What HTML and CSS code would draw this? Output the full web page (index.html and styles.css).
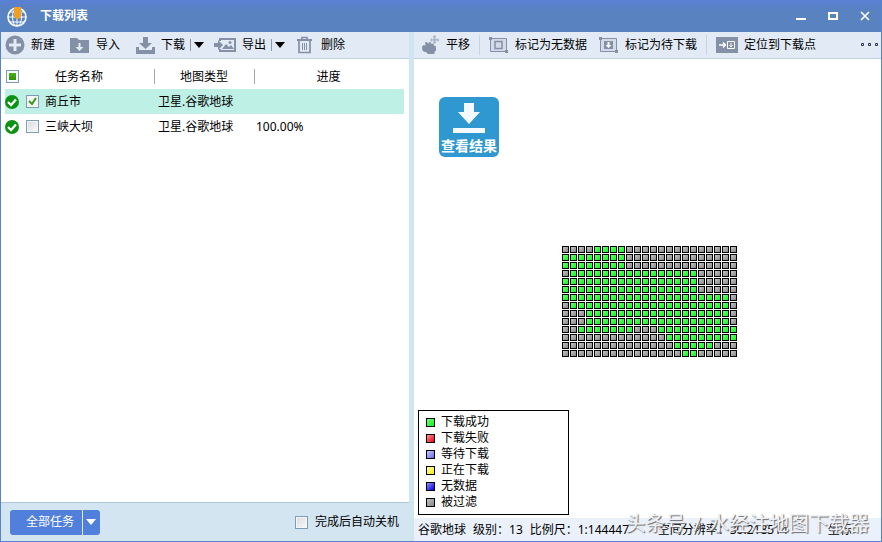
FILE: index.html
```html
<!DOCTYPE html>
<html lang="zh-CN">
<head>
<meta charset="utf-8">
<title>下载列表</title>
<link rel="stylesheet" href="styles.css">
</head>
<body>
<div class="window">
  <header class="titlebar">
    <svg class="logo" width="22" height="24" viewBox="0 0 22 24" fill="none" stroke="#fff">
      <circle cx="11" cy="14" r="9" stroke-width="1.6"/>
      <ellipse cx="11" cy="14" rx="4.5" ry="9"/>
      <path d="M2 14h18M4 9h14M4 19h14M11 14v9"/>
      <path d="M8 4h7v8h1l-4.500 5L7 12h1z" fill="#f0a020" stroke="none"/>
    </svg>
    <h1>下载列表</h1>
    <div class="controls">
      <button aria-label="最小化"><svg width="12" height="12"><path d="M1 9h10" stroke="#fff" stroke-width="2"/></svg></button>
      <button aria-label="最大化"><svg width="12" height="12"><path d="M2 3h8v6H2z" fill="none" stroke="#fff" stroke-width="2"/></svg></button>
      <button aria-label="关闭"><svg width="12" height="12"><path d="M2 2l8 8M10 2l-8 8" stroke="#fff" stroke-width="1.700"/></svg></button>
    </div>
  </header>

  <div class="panes">
    <section class="tasks">
      <nav class="toolbar">
        <button class="tool"><svg width="20" height="20"><circle cx="10" cy="10" r="9.500" fill="#8390a5"/><path d="M10 4v12M4 10h12" stroke="#e4ebf5" stroke-width="3"/></svg>新建</button>
        <button class="tool"><svg width="20" height="20"><path d="M0 3h7l2 2h10v13H0z" fill="#8390a5"/><path d="M8.500 8h2v4h3l-4 4-4-4h3z" fill="#e4ebf5"/></svg>导入</button>
        <div class="split">
          <button class="tool"><svg width="20" height="20"><path d="M8 2h5v6h4l-6.500 6L4 8h4z" fill="#8390a5"/><path d="M1 12h3v3h13v-3h3v7H1z" fill="#8390a5"/></svg>下载</button>
          <button class="drop" aria-label="下载选项"><svg width="10" height="6"><path d="M0 0h10L5 6z" fill="#000"/></svg></button>
        </div>
        <div class="split">
          <button class="tool"><svg width="22" height="20"><path d="M5 3h17v14H5v-3h2v1h13V5H7v1H5z" fill="#8390a5"/><path d="M0 8h4V5l5 5-5 5v-3H0z" fill="#8390a5"/><path d="M8 14l4-5 3 3 2-2 3 4z" fill="#8390a5"/><circle cx="16" cy="7.500" r="1.500" fill="#8390a5"/></svg>导出</button>
          <button class="drop" aria-label="导出选项"><svg width="10" height="6"><path d="M0 0h10L5 6z" fill="#000"/></svg></button>
        </div>
        <button class="tool"><svg width="20" height="20" fill="none" stroke="#8390a5"><path d="M2 5h15" stroke-width="2"/><path d="M7 4V2.500h5V4M4 6v11.500h11V6" stroke-width="1.700"/><path d="M7.500 8v7M9.500 8v7M11.500 8v7"/></svg>删除</button>
      </nav>
      <div class="list">
        <table>
          <colgroup><col class="col-name"><col class="col-type"><col></colgroup>
          <thead>
            <tr>
              <th><input class="all" type="checkbox" aria-label="全选">任务名称</th>
              <th>地图类型</th>
              <th>进度</th>
            </tr>
          </thead>
          <tbody>
            <tr class="selected">
              <td><div class="name"><svg class="done" width="14" height="14"><circle cx="7" cy="7" r="7" fill="#0b9212"/><path d="M3 7l3 3 5-5.500" fill="none" stroke="#fff" stroke-width="2.300"/></svg><input id="t1" type="checkbox" checked><label for="t1">商丘市</label></div></td>
              <td>卫星.谷歌地球</td>
              <td></td>
            </tr>
            <tr>
              <td><div class="name"><svg class="done" width="14" height="14"><circle cx="7" cy="7" r="7" fill="#0b9212"/><path d="M3 7l3 3 5-5.500" fill="none" stroke="#fff" stroke-width="2.300"/></svg><input id="t2" type="checkbox"><label for="t2">三峡大坝</label></div></td>
              <td>卫星.谷歌地球</td>
              <td class="progress">100.00%</td>
            </tr>
          </tbody>
        </table>
      </div>
      <footer class="actions">
        <div class="all-tasks">
          <button>全部任务</button>
          <button class="more" aria-label="更多操作"><svg width="10" height="6"><path d="M0 0h10L5 6z" fill="#fff"/></svg></button>
        </div>
        <label class="shutdown"><input type="checkbox">完成后自动关机</label>
      </footer>
    </section>

    <section class="viewer">
      <nav class="toolbar">
        <button class="tool"><svg width="20" height="20" fill="#8390a5"><path d="M2 12l1.500-2 2 .5L5 7.500l2-.5 1.500 2L9 7l2 .5.5 1.500 2-.5.500 2 2 1v4l-1.500 1.500V19H8l-2-2c-3 0-4-2-4-5z"/><path d="M14.500 0l2 2h-1v2h2V3l2 2-2 2V5.500h-2V7h1l-2 2-2-2h1V5.500h-1.500V7l-2-2 2-2v1.200h1.500V2h-1z" opacity=".6"/></svg>平移</button>
        <span class="rule"></span>
        <button class="tool"><svg width="20" height="20" fill="none" stroke="#8390a5"><path d="M1.500 3.500h16v13h-16z" fill="#d3dbe8"/><path d="M6 6.500h7v7H6z" stroke-width="1.500"/><path d="M0 2h3v3H0zM16 15h3v3h-3z" fill="#8390a5" stroke="none"/></svg>标记为无数据</button>
        <button class="tool"><svg width="20" height="20" fill="none" stroke="#8390a5"><path d="M1.500 3.500h16v13h-16z" fill="#d3dbe8"/><path d="M5 6h9v8H5z" fill="#8390a5" stroke="none"/><path d="M8.500 7h2v3h2l-3 3-3-3h2z" fill="#fff" stroke="none"/><path d="M0 2h3v3H0zM16 15h3v3h-3z" fill="#8390a5" stroke="none"/></svg>标记为待下载</button>
        <span class="rule"></span>
        <button class="tool"><svg width="22" height="20" fill="none" stroke="#fff"><path d="M0 2h22v16H0z" fill="#8390a5" stroke="none"/><path d="M3 10h6M7 7.500L9.500 10 7 12.500" stroke-width="1.500"/><path d="M11.500 6.500h7v7h-7zM15 8v4M13.500 10.500l1.500 1.500 1.500-1.500"/></svg>定位到下载点</button>
        <button class="overflow" aria-label="更多"><svg width="18" height="4" fill="#e4ebf5" stroke="#26344f"><path d="M.5.500h2v2h-2zM7.500.500h2v2h-2zM14.500.500h2v2h-2z"/></svg></button>
      </nav>
      <div class="map">
        <button class="result"><svg width="34" height="32" fill="#f4faff"><path d="M12 1h10v9h6L17 22 6 10h6zM1 26h32v5H1z"/></svg>查看结果</button>
        <div class="tiles" id="tiles"></div>
        <ul class="legend">
          <li><i class="tile ok"></i>下载成功</li>
          <li><i class="tile failed"></i>下载失败</li>
          <li><i class="tile waiting"></i>等待下载</li>
          <li><i class="tile active"></i>正在下载</li>
          <li><i class="tile nodata"></i>无数据</li>
          <li><i class="tile filtered"></i>被过滤</li>
        </ul>
      </div>
      <footer class="status">
        <span>谷歌地球</span><span>级别：13</span><span class="scale">比例尺：1:144447</span><span class="resolution">空间分辨率：30.218514</span><span>坐标</span>
      </footer>
      <div class="watermark"><span>头条号</span><span>/</span><span>水经注地图下载器</span></div>
    </section>
  </div>
</div>
<script src="tiles.js"></script>
</body>
</html>
```
FILE: styles.css
```css
* {
  box-sizing: border-box;
}

body {
  margin: 0;
  font: 12px/16px "Noto Sans", "Noto Sans CJK SC", sans-serif;
  color: #000;
}

button {
  margin: 0;
  padding: 0;
  border: 0;
  background: none;
  color: inherit;
  font: inherit;
}

svg {
  display: block;
  flex: none;
}

input[type="checkbox"] {
  appearance: none;
  flex: none;
  width: 13px;
  height: 13px;
  margin: 0;
  border: 1px solid #7e9db5;
  background: linear-gradient(135deg, #d8dade, #fafafa);
  box-shadow: inset 0 0 0 1px #f4f6f8;
}

input[type="checkbox"]:checked {
  background: #f4f6f4 url("data:image/svg+xml,%3Csvg xmlns='http://www.w3.org/2000/svg' width='11' height='11'%3E%3Cpath d='M2 5l3 3 4-6' fill='none' stroke='%23349a1c' stroke-width='2'/%3E%3C/svg%3E") center no-repeat;
}

.window {
  display: flex;
  flex-direction: column;
  height: 100vh;
  border: 1px solid #5882cc;
  border-top: 0;
  background: #fff;
}

.titlebar {
  display: flex;
  flex: none;
  align-items: center;
  height: 32px;
  padding: 0 10px 0 5px;
  background: linear-gradient(#5a80d6, #5882c0 10px);
  color: #fff;
}

.titlebar h1 {
  margin: 0 0 0 12px;
  font-size: 12px;
  font-weight: 700;
}

.logo {
  margin-top: -2px;
}

.controls {
  display: flex;
  gap: 20px;
  margin-left: auto;
}

.panes {
  display: grid;
  flex: 1;
  grid-template-columns: 413fr 467fr;
  min-height: 0;
}

.tasks,
.viewer {
  display: flex;
  flex-direction: column;
  min-width: 0;
}

.tasks {
  border-right: 5px solid #d0e5ef;
}

.viewer {
  position: relative;
}

.toolbar {
  display: flex;
  flex: none;
  align-items: center;
  gap: 10px;
  height: 27px;
  padding: 0 4px;
  border-bottom: 1px solid #b8d2de;
  background: #e2eaf5;
  white-space: nowrap;
}

.tool {
  display: flex;
  align-items: center;
  gap: 6px;
}

.tasks .toolbar > .tool {
  padding-right: 5px;
}

.split {
  display: flex;
  align-items: center;
  gap: 5px;
}

.drop {
  display: flex;
  align-items: center;
  height: 12px;
  padding-left: 3px;
  border-left: 1px solid #8f99a8;
}

.viewer .toolbar {
  gap: 12px;
  padding: 0 2px 0 6px;
}

.rule {
  width: 1px;
  height: 20px;
  margin: 0 -3px;
  background: #c8d4e2;
}

.overflow {
  margin-left: auto;
}

.list {
  flex: 1;
  padding: 5px 5px 5px 4px;
}

table {
  width: 100%;
  border-collapse: collapse;
  table-layout: fixed;
}

.col-name {
  width: 150px;
}

.col-type {
  width: 100px;
}

th,
td {
  height: 25px;
  padding: 0;
  font-weight: 400;
  text-align: left;
}

th {
  position: relative;
  padding-right: 2px;
  text-align: center;
}

th + th::before {
  content: "";
  position: absolute;
  top: 5px;
  bottom: 5px;
  left: -1px;
  width: 1px;
  background: #a8a8a8;
}

th .all {
  position: absolute;
  top: 6px;
  left: 1px;
  background: linear-gradient(#4caf1c, #2f9308) center / 7px 7px no-repeat;
}

td + td {
  padding-left: 3px;
}

td.progress {
  padding-left: 1px;
}

.selected {
  background: #bff0e5;
}

.name {
  display: flex;
  align-items: center;
}

.done {
  margin-right: 7px;
}

.name label {
  margin-left: 6px;
}

.actions {
  display: flex;
  flex: none;
  align-items: center;
  justify-content: space-between;
  height: 39px;
  padding: 0 10px 0 9px;
  border-top: 1px solid #adc8d6;
  background: #d3e5f0;
}

.all-tasks {
  display: flex;
  align-items: stretch;
  height: 25px;
  border-radius: 3px;
  background: #5080dc;
  color: #fff;
}

.all-tasks button {
  padding: 0 8px 0 16px;
}

.all-tasks .more {
  padding: 0 4px 0 3px;
  border-left: 1px solid #e2ebfa;
}

.shutdown {
  display: flex;
  align-items: center;
  gap: 7px;
}

.map {
  position: relative;
  flex: 1;
}

.result {
  position: absolute;
  top: 38px;
  left: 25px;
  display: flex;
  flex-direction: column;
  align-items: center;
  justify-content: space-between;
  width: 60px;
  height: 60px;
  padding: 5px 0 3px;
  border-radius: 6px;
  background: #3098d0;
  color: #fff;
  font-size: 14px;
  font-weight: 700;
}

.tiles {
  position: absolute;
  top: 187px;
  left: 148px;
  display: grid;
  grid-template-columns: repeat(22, 7px);
  grid-auto-rows: 7px;
  gap: 1px;
}

.tile {
  border: 1px solid #000;
}

.ok {
  background: linear-gradient(135deg, #70ff70, #08f818);
}

.failed {
  background: linear-gradient(135deg, #ff9090, #f00010);
}

.waiting {
  background: linear-gradient(135deg, #c8c8ff, #6868e8);
}

.active {
  background: linear-gradient(135deg, #ffffb0, #f4f000);
}

.nodata {
  background: linear-gradient(135deg, #9090ff, #0000e0);
}

.filtered {
  background: linear-gradient(135deg, #c4c4c4, #858585);
}

.legend {
  position: absolute;
  bottom: 3px;
  left: 4px;
  width: 151px;
  margin: 0;
  padding: 3px 7px 4px;
  border: 1px solid #000;
  background: #fff;
  list-style: none;
}

.legend li {
  display: flex;
  align-items: center;
  gap: 6px;
}

.legend .tile {
  width: 9px;
  height: 9px;
}

.status {
  display: flex;
  flex: none;
  align-items: center;
  gap: 7px;
  height: 23px;
  padding: 0 4px;
  background: #eaf1fa;
  white-space: nowrap;
}

.scale {
  width: 121px;
}

.resolution {
  width: 163px;
}

.watermark {
  position: absolute;
  right: 12px;
  bottom: 5px;
  display: flex;
  gap: 8px;
  color: #eef2f8;
  font-size: 20px;
  line-height: 24px;
  text-shadow: 1px 1px 1px #666;
  white-space: nowrap;
}
```
FILE: tiles.js
```js
// One string per tile row: "1" is a downloaded tile, "0" a filtered one.
const rows = [
  "0000111100000000000000",
  "1111111100000000000000",
  "1111111100000000000000",
  "0111111111111111100000",
  "1111111111111111100000",
  "1111111111111111100000",
  "1111111111111111111110",
  "0111111111111111111110",
  "0001111111111111111110",
  "0001111111111111111110",
  "0011111110001111111111",
  "0000000000000111111111",
  "0000000000000011111000",
  "0000000000000001100000"
];
const grid = document.getElementById("tiles");
for (const state of rows.join("")) {
  const tile = document.createElement("i");
  tile.className = state === "1" ? "tile ok" : "tile filtered";
  grid.append(tile);
}
```
